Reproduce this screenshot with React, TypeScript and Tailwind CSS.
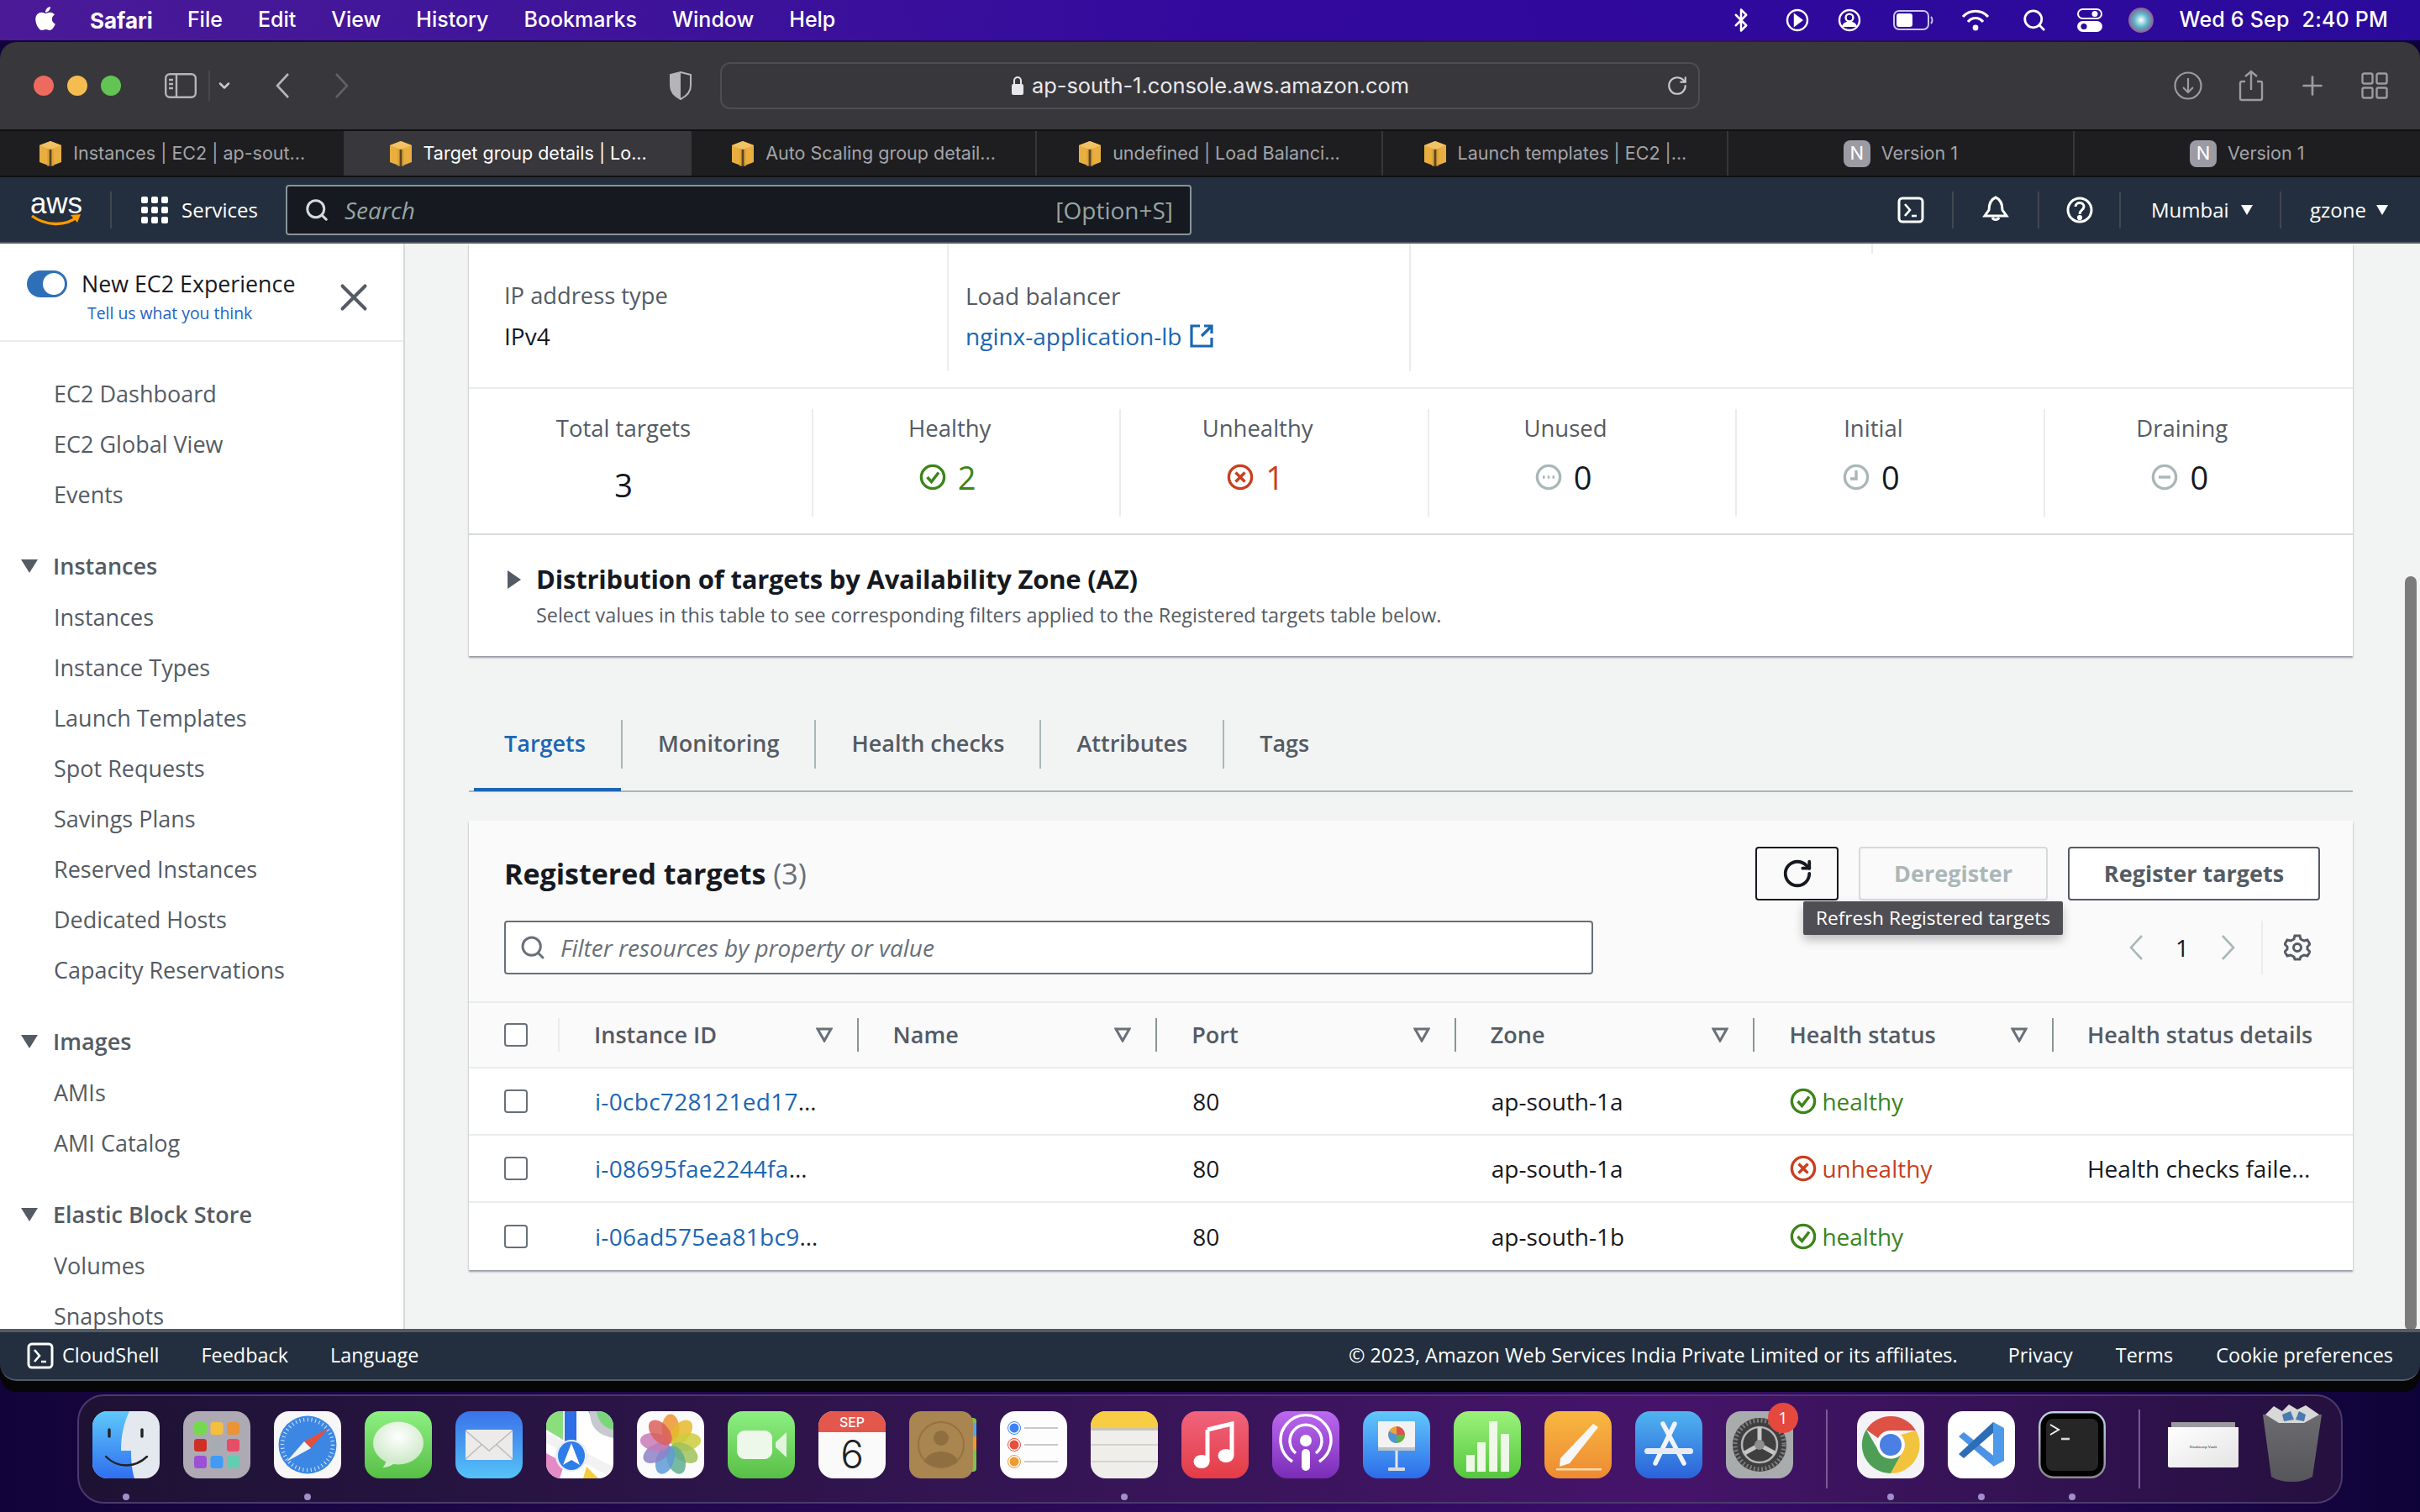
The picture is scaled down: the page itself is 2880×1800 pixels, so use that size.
import React from 'react';
import { FaApple } from 'react-icons/fa';
import { Bluetooth, Search, RotateCw, Plus, ChevronDown, X } from 'lucide-react';

const SANS = "font-['Open_Sans','Noto_Sans',sans-serif]";
const MAC = "font-['Inter','Liberation_Sans',sans-serif]";

const menuItems = ['File', 'Edit', 'View', 'History', 'Bookmarks', 'Window', 'Help'];

const tabs = [
  { label: 'Instances | EC2 | ap-sout...', kind: 'aws' },
  { label: 'Target group details | Lo...', kind: 'aws', active: true },
  { label: 'Auto Scaling group detail...', kind: 'aws' },
  { label: 'undefined | Load Balanci...', kind: 'aws' },
  { label: 'Launch templates | EC2 |...', kind: 'aws' },
  { label: 'Version 1', kind: 'notion' },
  { label: 'Version 1', kind: 'notion' },
];

const navGroups = [
  { items: ['EC2 Dashboard', 'EC2 Global View', 'Events'] },
  { title: 'Instances', items: ['Instances', 'Instance Types', 'Launch Templates', 'Spot Requests', 'Savings Plans', 'Reserved Instances', 'Dedicated Hosts', 'Capacity Reservations'] },
  { title: 'Images', items: ['AMIs', 'AMI Catalog'] },
  { title: 'Elastic Block Store', items: ['Volumes', 'Snapshots'] },
];

const rows = [
  { id: 'i-0cbc728121ed17', zone: 'ap-south-1a', ok: true, details: '' },
  { id: 'i-08695fae2244fa', zone: 'ap-south-1a', ok: false, details: 'Health checks faile...' },
  { id: 'i-06ad575ea81bc9', zone: 'ap-south-1b', ok: true, details: '' },
];

const CubeIcon = () => (
  <svg width="28" height="30" viewBox="0 0 28 30" className="shrink-0">
    <path d="M14 0 L27 5 V25 L14 30 L1 25 V5 Z" fill="#e8ae3f" />
    <path d="M1 5 L14 10 L27 5 L14 0 Z" fill="#f2c265" />
    <path d="M10 9 H18 V30 H10 Z" fill="#d69a2d" opacity="0.55" />
    <path d="M12.6 10 H15.4 V30 H12.6 Z" fill="#1e1e20" opacity="0.7" />
  </svg>
);

const NotionIcon = () => (
  <span className="w-[32px] h-[32px] rounded-[8px] bg-[#9b9ba3] text-white text-[22px] flex items-center justify-center shrink-0">N</span>
);

const CloudShellIcon = ({ size = 32 }: { size?: number }) => (
  <svg width={size} height={size} viewBox="0 0 32 32" fill="none" stroke="#fff" className="shrink-0">
    <rect x="2" y="2" width="28" height="28" rx="4" strokeWidth="3" />
    <path d="M9 9 L15 16 L9 23" strokeWidth="2.6" />
    <path d="M17 23 H23" strokeWidth="2.6" />
  </svg>
);

const CheckCircle = ({ size, color }: { size: number; color: string }) => (
  <svg width={size} height={size} viewBox="0 0 32 32" fill="none" stroke={color} strokeWidth="3.4" className="shrink-0">
    <circle cx="16" cy="16" r="13.6" />
    <path d="M9.5 16 L14.5 21.5 L23 10.5" />
  </svg>
);

const XCircle = ({ size, color }: { size: number; color: string }) => (
  <svg width={size} height={size} viewBox="0 0 32 32" fill="none" stroke={color} strokeWidth="3.4" className="shrink-0">
    <circle cx="16" cy="16" r="13.6" />
    <path d="M10.5 10.5 L21.5 21.5 M21.5 10.5 L10.5 21.5" />
  </svg>
);

const PendingIcon = ({ kind }: { kind: 'dots' | 'clock' | 'minus' }) => (
  <svg width="32" height="32" viewBox="0 0 32 32" fill="none" stroke="#aab7b8" strokeWidth="3.4" className="shrink-0">
    <circle cx="16" cy="16" r="13.6" />
    {kind === 'dots' && <path d="M9 16 H11.5 M14.8 16 H17.2 M20.5 16 H23" />}
    {kind === 'clock' && <path d="M16 8 V18 H9" />}
    {kind === 'minus' && <path d="M9 16 H23" />}
  </svg>
);

const FilterTriangle = () => (
  <svg width="20" height="18" viewBox="0 0 20 18" fill="none" stroke="#687078" strokeWidth="3" className="shrink-0">
    <path d="M2 2 H18 L10 16 Z" />
  </svg>
);

// tall, sharp chevrons used by Safari and the pagination
const Chevron = ({ dir, color, cls = '' }: { dir: 'l' | 'r'; color: string; cls?: string }) => (
  <svg width="18" height="30" viewBox="0 0 18 30" fill="none" stroke={color} strokeWidth="2.6" className={`shrink-0 ${cls}`}>
    <path d={dir === 'l' ? 'M16 1 L3 15 L16 29' : 'M2 1 L15 15 L2 29'} />
  </svg>
);

const Nav = ({ children, cls = '' }: { children: React.ReactNode; cls?: string }) => (
  <div className={`flex items-center border-l-2 border-[#414750] h-[44px] ${cls}`}>{children}</div>
);

function Stat({ label, children, big }: { label: string; children: React.ReactNode; big?: boolean }) {
  return (
    <div className="flex flex-col items-center pr-[40px] pt-[3px] border-r-2 border-[#eaeded] last:border-r-0 h-[128px]">
      <div className="text-[27.5px] leading-[40px] text-[#545b64]">{label}</div>
      <div className={`flex items-center gap-[14px] text-[38px] leading-[44px] ${big ? 'mt-[25px]' : 'mt-[16px] -ml-[5px]'}`}>{children}</div>
    </div>
  );
}

/* dock icons, all on an 80 box */
const Finder = () => (
  <svg viewBox="0 0 80 80" className="w-full h-full">
    <defs>
      <linearGradient id="fb" x1="0" y1="0" x2="0" y2="1"><stop offset="0" stopColor="#5ec8fa" /><stop offset="1" stopColor="#2f6ff0" /></linearGradient>
    </defs>
    <rect width="80" height="80" rx="18" fill="#e4e8ef" />
    <path d="M18 0 H44 C37 15 34 30 34 47 H46 C46 60 47 70 50 80 H18 A18 18 0 0 1 0 62 V18 A18 18 0 0 1 18 0 Z" fill="url(#fb)" />
    <path d="M20 22 V30 M59 22 V30" stroke="#222" strokeWidth="3.4" strokeLinecap="round" />
    <path d="M16 54 C30 68 50 68 65 54" stroke="#222" strokeWidth="2.4" fill="none" strokeLinecap="round" />
  </svg>
);

const Launchpad = () => {
  const cols = ['#74d94f', '#f5bf3e', '#ea9337', '#cf2f25', '#a6adb0', '#e84d66', '#9d4fd6', '#3f9bf6', '#63cdb0'];
  return (
    <svg viewBox="0 0 80 80" className="w-full h-full">
      <rect width="80" height="80" rx="18" fill="#aeaab4" />
      {cols.map((c, i) => (
        <rect key={i} x={13 + (i % 3) * 19.5} y={13 + Math.floor(i / 3) * 20} width="15" height="15" rx="3.5" fill={c} />
      ))}
    </svg>
  );
};

const Safari = () => (
  <svg viewBox="0 0 80 80" className="w-full h-full">
    <rect width="80" height="80" rx="18" fill="#f7f7f7" />
    <circle cx="40" cy="40" r="34.5" fill="#3d87e4" />
    <circle cx="40" cy="40" r="30" fill="none" stroke="#d7e8fb" strokeWidth="4.5" strokeDasharray="1 3.7" />
    <path d="M65 20 L36 36 L44 44 Z" fill="#e0503f" />
    <path d="M15 60 L36 36 L44 44 Z" fill="#f4f4f4" />
  </svg>
);

const Messages = () => (
  <svg viewBox="0 0 80 80" className="w-full h-full">
    <defs>
      <linearGradient id="mg" x1="0" y1="0" x2="0" y2="1"><stop offset="0" stopColor="#8df082" /><stop offset="1" stopColor="#58bf46" /></linearGradient>
      <radialGradient id="mb" cx="0.5" cy="0.35" r="0.7"><stop offset="0" stopColor="#fff" /><stop offset="1" stopColor="#c7e6c0" /></radialGradient>
    </defs>
    <rect width="80" height="80" rx="18" fill="url(#mg)" />
    <ellipse cx="40" cy="38" rx="30" ry="25.5" fill="url(#mb)" />
    <path d="M26 58 C25 62 23 66 21 67 C28 67 34 64 37 60 Z" fill="#d4ecce" />
  </svg>
);

const Mail = () => (
  <svg viewBox="0 0 80 80" className="w-full h-full">
    <defs>
      <linearGradient id="mailg" x1="0" y1="0" x2="0" y2="1"><stop offset="0" stopColor="#3a72ea" /><stop offset="1" stopColor="#55c3f8" /></linearGradient>
    </defs>
    <rect width="80" height="80" rx="18" fill="url(#mailg)" />
    <rect x="12" y="22" width="56" height="36" rx="2" fill="#ecebea" />
    <path d="M12 23 L40 47 L68 23 M12 57 L31 40 M68 57 L49 40" stroke="#b9b9b9" strokeWidth="1.4" fill="none" />
  </svg>
);

const Maps = () => (
  <svg viewBox="0 0 80 80" className="w-full h-full">
    <clipPath id="mapc"><rect width="80" height="80" rx="18" /></clipPath>
    <g clipPath="url(#mapc)">
      <rect width="80" height="80" fill="#fff" />
      <path d="M50 0 H80 V28 L60 20 Z" fill="#7ad67a" />
      <path d="M0 0 H20 V34 L0 22 Z" fill="#8adf7c" />
      <path d="M0 50 L22 62 L16 80 H0 Z" fill="#e48ac5" />
      <path d="M48 66 L62 80 H44 Z" fill="#f4cf3b" />
      <path d="M52 0 C52 20 62 28 80 32 V22 C70 20 62 14 60 0 Z" fill="#c6c9d0" />
      <path d="M22 0 H36 V40 H22 Z" fill="#2c6fe6" />
      <path d="M0 26 L80 66 V80 L0 38 Z" fill="#f2f2f2" />
      <circle cx="30" cy="53" r="19" fill="#e8eef7" />
      <ellipse cx="30" cy="53" rx="16" ry="17" fill="#2f7de8" />
      <path d="M30 38 L40 64 L30 58 L20 64 Z" fill="#fff" />
    </g>
  </svg>
);

const Photos = () => {
  const cols = ['#ec9431', '#e6b82c', '#cdcd3d', '#9fc25a', '#5fae8f', '#5f9bd6', '#8c83c7', '#c77bb7', '#d9605b'];
  return (
    <svg viewBox="0 0 80 80" className="w-full h-full">
      <rect width="80" height="80" rx="18" fill="#fbfbfb" />
      {cols.map((c, i) => (
        <ellipse key={i} cx="40" cy="21" rx="10.5" ry="17.5" fill={c} opacity="0.85" transform={`rotate(${i * 40} 40 40)`} />
      ))}
    </svg>
  );
};

const FaceTime = () => (
  <svg viewBox="0 0 80 80" className="w-full h-full">
    <defs>
      <linearGradient id="ftg" x1="0" y1="0" x2="0" y2="1"><stop offset="0" stopColor="#8df082" /><stop offset="1" stopColor="#58bf46" /></linearGradient>
    </defs>
    <rect width="80" height="80" rx="18" fill="url(#ftg)" />
    <rect x="11" y="23" width="42" height="34" rx="9" fill="#eef8ea" />
    <path d="M57 37 L70 25 V55 L57 43 Z" fill="#e3f4dd" />
  </svg>
);

const Calendar = () => (
  <svg viewBox="0 0 80 80" className="w-full h-full">
    <clipPath id="calc"><rect width="80" height="80" rx="18" /></clipPath>
    <g clipPath="url(#calc)">
      <rect width="80" height="80" fill="#fafafa" />
      <rect width="80" height="25" fill="#e4574c" />
    </g>
    <text x="40" y="19" fill="#fff" fontSize="16" fontWeight="500" textAnchor="middle" fontFamily="Inter, sans-serif">SEP</text>
    <text x="40" y="68" fill="#222" fontSize="46" fontWeight="300" textAnchor="middle" fontFamily="Inter, sans-serif">6</text>
  </svg>
);

const Contacts = () => (
  <svg viewBox="0 0 80 80" className="w-full h-full">
    <rect x="66" y="8" width="14" height="64" rx="4" fill="#7cc34d" />
    <rect x="72" y="30" width="8" height="16" fill="#ef9a2a" />
    <rect x="72" y="14" width="8" height="16" fill="#55a7e6" />
    <rect width="76" height="80" rx="14" fill="#a98550" />
    <circle cx="38" cy="40" r="27" fill="none" stroke="#947241" strokeWidth="2" />
    <circle cx="38" cy="32" r="9" fill="#8f6f40" />
    <path d="M18 60 C22 44 54 44 58 60 C50 68 26 68 18 60 Z" fill="#8f6f40" />
  </svg>
);

const Reminders = () => (
  <svg viewBox="0 0 80 80" className="w-full h-full">
    <rect width="80" height="80" rx="18" fill="#fdfdfd" />
    {[['#3b82f6', 20], ['#ea4f3d', 40], ['#ee9a31', 60]].map(([c, y]) => (
      <g key={String(y)}>
        <circle cx="17" cy={Number(y)} r="5.5" fill={String(c)} />
        <circle cx="17" cy={Number(y)} r="7.5" fill="none" stroke={String(c)} strokeWidth="1" />
        <rect x="29" y={Number(y) - 1} width="40" height="2" fill="#c9c9c9" />
      </g>
    ))}
  </svg>
);

const Notes = () => (
  <svg viewBox="0 0 80 80" className="w-full h-full">
    <clipPath id="notec"><rect width="80" height="80" rx="18" /></clipPath>
    <g clipPath="url(#notec)">
      <rect width="80" height="80" fill="#efeeea" />
      <rect width="80" height="20" fill="#f7cd44" />
      <rect y="20" width="80" height="3" fill="#c9c5b7" />
      <rect y="39" width="80" height="2" fill="#d6d4cd" />
      <rect y="59" width="80" height="2" fill="#d6d4cd" />
    </g>
  </svg>
);

const Music = () => (
  <svg viewBox="0 0 80 80" className="w-full h-full">
    <defs>
      <linearGradient id="mug" x1="0" y1="0" x2="0" y2="1"><stop offset="0" stopColor="#f0647c" /><stop offset="1" stopColor="#e43c46" /></linearGradient>
    </defs>
    <rect width="80" height="80" rx="18" fill="url(#mug)" />
    <path d="M31 22 L60 15 V52" stroke="#fff" strokeWidth="5" fill="none" />
    <path d="M31 22 V60" stroke="#fff" strokeWidth="5" fill="none" />
    <ellipse cx="24" cy="60" rx="9.5" ry="8" fill="#fff" />
    <ellipse cx="53" cy="53" rx="9.5" ry="8" fill="#fff" />
  </svg>
);

const Podcasts = () => (
  <svg viewBox="0 0 80 80" className="w-full h-full" fill="none" stroke="#fff">
    <defs>
      <linearGradient id="pog" x1="0" y1="0" x2="0" y2="1"><stop offset="0" stopColor="#bc69ef" /><stop offset="1" stopColor="#7a2cb8" /></linearGradient>
    </defs>
    <rect width="80" height="80" rx="18" fill="url(#pog)" stroke="none" />
    <path d="M24 60 A30 30 0 1 1 56 60" strokeWidth="3.4" />
    <path d="M28 50 A19 19 0 1 1 52 50" strokeWidth="3.4" />
    <circle cx="40" cy="35" r="7" fill="#fff" stroke="none" />
    <rect x="35" y="45" width="10" height="26" rx="5" fill="#fff" stroke="none" />
  </svg>
);

const Keynote = () => (
  <svg viewBox="0 0 80 80" className="w-full h-full">
    <defs>
      <linearGradient id="kg" x1="0" y1="0" x2="0" y2="1"><stop offset="0" stopColor="#61c8fb" /><stop offset="1" stopColor="#2c6cea" /></linearGradient>
    </defs>
    <rect width="80" height="80" rx="18" fill="url(#kg)" />
    <rect x="18" y="12" width="44" height="31" rx="1" fill="#f2f2f2" />
    <circle cx="40" cy="28" r="10" fill="#e8a53a" />
    <path d="M40 28 L40 18 A10 10 0 0 1 50 28 Z" fill="#d9534f" />
    <path d="M40 28 L50 28 A10 10 0 0 1 40 38 Z" fill="#5fb04c" />
    <path d="M40 28 L40 38 A10 10 0 0 1 31 24 Z" fill="#4f94d8" />
    <rect x="18" y="43" width="44" height="4" fill="#b9c3cc" />
    <rect x="38.5" y="47" width="3" height="22" fill="#e7e7e7" />
    <rect x="30" y="67" width="20" height="4" rx="1" fill="#d6dae0" />
  </svg>
);

const NumbersIcon = () => (
  <svg viewBox="0 0 80 80" className="w-full h-full">
    <defs>
      <linearGradient id="ng" x1="0" y1="0" x2="0" y2="1"><stop offset="0" stopColor="#9bf27a" /><stop offset="1" stopColor="#56c73e" /></linearGradient>
    </defs>
    <rect width="80" height="80" rx="18" fill="url(#ng)" />
    <rect x="15" y="52" width="10" height="20" fill="#eef7e8" />
    <rect x="28" y="37" width="10" height="35" fill="#eef7e8" />
    <rect x="42" y="12" width="10" height="60" fill="#eef7e8" />
    <rect x="56" y="27" width="10" height="45" fill="#eef7e8" />
  </svg>
);

const Pages = () => (
  <svg viewBox="0 0 80 80" className="w-full h-full">
    <defs>
      <linearGradient id="pg" x1="0" y1="0" x2="0" y2="1"><stop offset="0" stopColor="#f8b840" /><stop offset="1" stopColor="#ee8a33" /></linearGradient>
    </defs>
    <rect width="80" height="80" rx="18" fill="url(#pg)" />
    <path d="M58 15 L64 19 L30 62 L18 66 L19 56 Z" fill="#f7f7f7" />
    <rect x="14" y="68" width="54" height="2.5" fill="#fbd9a8" />
  </svg>
);

const AppStore = () => (
  <svg viewBox="0 0 80 80" className="w-full h-full" fill="none">
    <defs>
      <linearGradient id="asg" x1="0" y1="0" x2="0" y2="1"><stop offset="0" stopColor="#50b4f0" /><stop offset="1" stopColor="#2b62da" /></linearGradient>
    </defs>
    <rect width="80" height="80" rx="18" fill="url(#asg)" />
    <path d="M33 15 L58 62 M47 15 L24 62" stroke="#f2f4f8" strokeWidth="5.5" strokeLinecap="round" />
    <rect x="11" y="44" width="58" height="7" rx="3.5" fill="#e8ecf2" />
  </svg>
);

const SystemPrefs = () => (
  <svg viewBox="0 0 80 80" className="w-full h-full" fill="none">
    <rect width="80" height="80" rx="18" fill="#a9acad" />
    <circle cx="40" cy="40" r="32" fill="#3f3f40" />
    <circle cx="40" cy="40" r="29" stroke="#7d7d7e" strokeWidth="5" strokeDasharray="2 2.6" />
    <circle cx="40" cy="40" r="21" stroke="#b5b5b5" strokeWidth="2.5" />
    <path d="M40 40 V19 M40 40 L58 50 M40 40 L22 50" stroke="#c6c6c6" strokeWidth="5" />
    <circle cx="40" cy="40" r="6" fill="#8d8d8d" />
  </svg>
);

const Chrome = () => (
  <svg viewBox="0 0 80 80" className="w-full h-full">
    <rect width="80" height="80" rx="18" fill="#f3f3f7" />
    <path d="M40 6 A34 34 0 0 1 70 23 H40 A17 17 0 0 0 25 32 L11 22 A34 34 0 0 1 40 6 Z" fill="#de5246" />
    <path d="M70 23 A34 34 0 0 1 40 74 L52 52 A17 17 0 0 0 52 28 Z" fill="#f2c43d" />
    <path d="M11 22 L25 46 A17 17 0 0 0 52 52 L40 74 A34 34 0 0 1 11 22 Z" fill="#4e9f55" />
    <circle cx="40" cy="40" r="16.5" fill="#fff" />
    <circle cx="40" cy="40" r="13" fill="#4a7fe4" />
  </svg>
);

const VSCode = () => (
  <svg viewBox="0 0 80 80" className="w-full h-full">
    <rect width="80" height="80" rx="18" fill="#fff" />
    <path d="M13 30 L19 25 L62 59 L54 65 Z" fill="#4c93e6" />
    <path d="M54 13 L62 18 V19 L19 56 L13 51 Z" fill="#2c6db5" />
    <path d="M54 13 L67 20 V59 L54 66 Z" fill="#4c9ae9" />
  </svg>
);

const TerminalApp = () => (
  <svg viewBox="0 0 80 80" className="w-full h-full" fill="none">
    <defs>
      <linearGradient id="tg" x1="0" y1="0" x2="0" y2="1"><stop offset="0" stopColor="#bcd6e2" /><stop offset="1" stopColor="#8a8a8a" /></linearGradient>
    </defs>
    <rect width="80" height="80" rx="18" fill="url(#tg)" />
    <rect x="2.5" y="2.5" width="75" height="75" rx="15" fill="#000" />
    <rect x="9" y="9" width="62" height="62" rx="8" fill="#262626" />
    <path d="M14 16 L24 22 L14 28" stroke="#f2f2f2" strokeWidth="2" />
    <path d="M27 33 H37" stroke="#d8d8d8" strokeWidth="2.6" />
  </svg>
);

const DockTile = ({ children, dot, badge }: { children: React.ReactNode; dot?: boolean; badge?: boolean }) => (
  <div className="relative w-[108px] flex flex-col items-center shrink-0">
    <div className="w-[80px] h-[80px]">{children}</div>
    {badge && (
      <span className="absolute top-[-10px] left-[64px] w-[36px] h-[36px] rounded-full bg-[#e5483c] text-white text-[20px] flex items-center justify-center">1</span>
    )}
    <div className={`mt-[18px] w-[8px] h-[8px] rounded-full ${dot ? 'bg-[#a18fc9]' : ''}`} />
  </div>
);

const dockApps = [
  { el: <Finder />, dot: true }, { el: <Launchpad /> }, { el: <Safari />, dot: true }, { el: <Messages /> }, { el: <Mail /> },
  { el: <Maps /> }, { el: <Photos /> }, { el: <FaceTime /> }, { el: <Calendar /> }, { el: <Contacts /> }, { el: <Reminders /> },
  { el: <Notes />, dot: true }, { el: <Music /> }, { el: <Podcasts /> }, { el: <Keynote /> }, { el: <NumbersIcon /> }, { el: <Pages /> },
  { el: <AppStore /> }, { el: <SystemPrefs />, badge: true },
];

function MenuBar() {
  return (
    <div className={`h-[48px] flex items-center text-white text-[25px] bg-gradient-to-r from-[#4a1a97] via-[#33099d] to-[#2a0a9b] pl-[38px] pr-[38px] ${MAC}`}>
      <FaApple className="text-[32px] mb-[4px]" />
      <span className="ml-[37px] font-bold text-[26px]">Safari</span>
      <div className="flex gap-[42px] ml-[41px]">
        {menuItems.map((m) => <span key={m} className="font-medium">{m}</span>)}
      </div>
      <div className="ml-auto flex items-center">
        <Bluetooth size={30} strokeWidth={2} />
        <svg width="28" height="28" viewBox="0 0 28 28" fill="none" stroke="#fff" strokeWidth="2.4" className="ml-[38px]">
          <circle cx="14" cy="14" r="12" /><path d="M11 8 L19 14 L11 20 Z" fill="#fff" />
        </svg>
        <svg width="28" height="28" viewBox="0 0 28 28" fill="none" stroke="#fff" strokeWidth="2.4" className="ml-[34px]">
          <circle cx="14" cy="14" r="12" /><circle cx="14" cy="11" r="4.4" />
          <path d="M6 22 C8 15 20 15 22 22" fill="#fff" />
        </svg>
        <svg width="48" height="24" viewBox="0 0 48 24" fill="none" className="ml-[38px]">
          <rect x="1" y="1" width="41" height="22" rx="6" stroke="#c9c4e6" strokeWidth="2" />
          <rect x="4" y="4" width="19" height="16" rx="3" fill="#fff" />
          <path d="M45 8 C47 10 47 14 45 16" stroke="#c9c4e6" strokeWidth="2" />
        </svg>
        <svg width="34" height="26" viewBox="0 0 34 26" fill="none" stroke="#fff" strokeWidth="3.2" className="ml-[33px]">
          <path d="M2 9 C10 0 24 0 32 9" /><path d="M8 15 C13 9 21 9 26 15" />
          <circle cx="17" cy="22" r="3.4" fill="#fff" stroke="none" />
        </svg>
        <Search size={30} strokeWidth={2.2} className="ml-[38px]" />
        <svg width="30" height="28" viewBox="0 0 30 28" fill="none" className="ml-[36px]">
          <rect x="1" y="1" width="28" height="11" rx="5.5" stroke="#fff" strokeWidth="2" /><circle cx="21" cy="6.5" r="3.5" fill="#fff" />
          <rect x="0" y="15" width="30" height="13" rx="6.5" fill="#fff" /><circle cx="8" cy="21.5" r="3.6" fill="#33099d" />
        </svg>
        <svg width="30" height="30" viewBox="0 0 30 30" className="ml-[31px]">
          <defs>
            <radialGradient id="siri" cx="0.5" cy="0.5" r="0.6"><stop offset="0" stopColor="#fff" /><stop offset="0.45" stopColor="#5bb7c9" /><stop offset="1" stopColor="#a3357d" /></radialGradient>
          </defs>
          <circle cx="15" cy="15" r="15" fill="url(#siri)" />
        </svg>
        <span className="ml-[30px] font-medium tracking-[0.2px]">Wed 6 Sep</span>
        <span className="ml-[15px] font-medium tracking-[0.2px]">2:40 PM</span>
      </div>
    </div>
  );
}

function SafariToolbar() {
  return (
    <div className="h-[104px] bg-[#38373b] flex items-center text-[#d8d8da]">
      <div className="flex items-center gap-[16px] ml-[40px]">
        <span className="w-[24px] h-[24px] rounded-full bg-[#ee6a5f]" />
        <span className="w-[24px] h-[24px] rounded-full bg-[#f5bd4f]" />
        <span className="w-[24px] h-[24px] rounded-full bg-[#61c454]" />
      </div>
      <svg width="38" height="30" viewBox="0 0 38 30" fill="none" stroke="#b5b5b8" strokeWidth="2.4" className="ml-[52px]">
        <rect x="1.2" y="1.2" width="35.6" height="27.6" rx="5" /><path d="M14 1 V29" />
        <path d="M5 8 H10 M5 13 H10 M5 18 H10" />
      </svg>
      <div className="w-[2px] h-[36px] bg-[#48474b] ml-[14px]" />
      <ChevronDown size={20} strokeWidth={3} className="ml-[7px] text-[#c8c8ca]" />
      <Chevron dir="l" color="#b5b5b8" cls="ml-[50px]" />
      <Chevron dir="r" color="#616064" cls="ml-[53px]" />
      <svg width="26" height="34" viewBox="0 0 26 34" className="ml-[381px]">
        <path d="M13 1 L25 4 V17 C25 25 19 30 13 33 C7 30 1 25 1 17 V4 Z" fill="none" stroke="#b5b5b8" strokeWidth="2" />
        <path d="M13 1 V33 C7 30 1 25 1 17 V4 Z" fill="#b5b5b8" />
      </svg>
      <div className="ml-[34px] w-[1166px] h-[56px] border-2 border-[#4e4d51] rounded-[12px] flex items-center justify-center relative">
        <svg width="16" height="24" viewBox="0 0 16 24" fill="none" className="mr-[9px]">
          <path d="M4 11 V6 A4 4 0 0 1 12 6 V11" stroke="#e8e8ea" strokeWidth="2" /><rect x="1" y="10" width="14" height="13" rx="2" fill="#e8e8ea" />
        </svg>
        <span className={`text-[25.4px] text-[#e9e9eb] ${MAC}`}>ap-south-1.console.aws.amazon.com</span>
        <RotateCw size={26} strokeWidth={2} className="absolute right-[12px] text-[#c8c8ca]" />
      </div>
      <div className="ml-auto mr-[38px] flex items-center text-[#9c9ca0]">
        <svg width="34" height="34" viewBox="0 0 34 34" fill="none" stroke="currentColor" strokeWidth="2.2">
          <circle cx="17" cy="17" r="15.5" /><path d="M17 8 V25 M11 19 L17 25 L23 19" />
        </svg>
        <svg width="30" height="38" viewBox="0 0 30 38" fill="none" stroke="currentColor" strokeWidth="2.4" className="ml-[43px]">
          <path d="M8 14 H4 Q2 14 2 16 V34 Q2 36 4 36 H26 Q28 36 28 34 V16 Q28 14 26 14 H22" /><path d="M15 24 V2 M8 8 L15 2 L22 8" />
        </svg>
        <Plus size={36} strokeWidth={1.8} className="ml-[40px]" />
        <svg width="32" height="32" viewBox="0 0 32 32" fill="none" stroke="currentColor" strokeWidth="2.4" className="ml-[40px]">
          <rect x="1.5" y="1.5" width="12" height="12" rx="2" /><rect x="18.5" y="1.5" width="12" height="12" rx="2" />
          <rect x="1.5" y="18.5" width="12" height="12" rx="2" /><rect x="18.5" y="18.5" width="12" height="12" rx="2" />
        </svg>
      </div>
    </div>
  );
}

function TabBar() {
  return (
    <div className={`h-[57px] grid grid-cols-7 bg-[#1e1e20] border-y-2 border-[#111113] ${MAC}`}>
      {tabs.map((t, i) => (
        <div
          key={i}
          className={`flex items-center justify-center gap-[13px] text-[21.5px] whitespace-nowrap border-r-2 border-[#36363a] last:border-r-0 ${t.active ? 'bg-[#38373b] text-white' : 'text-[#a4a4a8]'}`}
        >
          {t.kind === 'aws' ? <CubeIcon /> : <NotionIcon />}
          <span>{t.label}</span>
        </div>
      ))}
    </div>
  );
}

function AwsNav() {
  return (
    <div className={`h-[79px] bg-[#232f3e] border-b-2 border-[#545b64] flex items-center text-white ${SANS}`}>
      <div className="ml-[36px] w-[62px] flex flex-col items-center shrink-0">
        <span className="font-['Liberation_Sans',sans-serif] text-[35px] leading-[26px]">aws</span>
        <svg width="62" height="16" viewBox="0 0 62 16">
          <path d="M2 2 C18 14 42 15 56 3" stroke="#ff9900" strokeWidth="3.4" fill="none" />
          <path d="M48 1 L60 0 L56 10" fill="#ff9900" />
        </svg>
      </div>
      <div className="w-[2px] h-[44px] bg-[#414750] ml-[33px]" />
      <div className="grid grid-cols-3 gap-[4px] ml-[35px] w-[32px]">
        {Array.from({ length: 9 }).map((_, i) => <span key={i} className="h-[8px] bg-white rounded-[2px]" />)}
      </div>
      <span className="ml-[16px] w-[89px] text-[24px] whitespace-nowrap">Services</span>
      <div className="ml-[35px] w-[1078px] h-[60px] bg-[#16191f] border-2 border-[#879596] rounded-[4px] flex items-center px-[20px]">
        <Search size={30} strokeWidth={2.4} className="text-[#d5dbdb]" />
        <span className="ml-[18px] text-[28px] italic text-[#95a5a6]">Search</span>
        <span className="ml-auto text-[28px] text-[#95a5a6]">[Option+S]</span>
      </div>
      <div className="ml-auto flex items-center">
        <div className="w-[98px] flex justify-center"><CloudShellIcon /></div>
        <Nav cls="w-[102px] justify-center">
          <svg width="32" height="34" viewBox="0 0 32 34" fill="none" stroke="#fff" strokeWidth="3">
            <path d="M16 2 C9 5 8 11 8 17 L3 24 H29 L24 17 C24 11 23 5 16 2 Z" /><path d="M12 26 A4.5 4.5 0 0 0 20 26" />
          </svg>
        </Nav>
        <Nav cls="w-[97px] justify-center">
          <svg width="32" height="32" viewBox="0 0 32 32" fill="none" stroke="#fff" strokeWidth="3">
            <circle cx="16" cy="16" r="14" /><path d="M11 12 C11 6 21 6 21 12 C21 16 16 16 16 21" /><circle cx="16" cy="25" r="1.6" fill="#fff" />
          </svg>
        </Nav>
        <Nav cls="w-[191px] pl-[36px] gap-[14px] text-[24px]">
          Mumbai <svg width="14" height="12" viewBox="0 0 14 12" fill="#fff"><path d="M0 0 H14 L7 12 Z" /></svg>
        </Nav>
        <Nav cls="w-[167px] pl-[34px] gap-[12px] text-[24px]">
          gzone <svg width="14" height="12" viewBox="0 0 14 12" fill="#fff"><path d="M0 0 H14 L7 12 Z" /></svg>
        </Nav>
      </div>
    </div>
  );
}

function Sidebar() {
  return (
    <aside className="w-[482px] shrink-0 bg-white border-r-2 border-[#d5dbdb] overflow-hidden">
      <div className="h-[117px] border-b-2 border-[#eaeded] flex items-start pl-[32px] pt-[32px] pr-[32px]">
        <div className="w-[48px] h-[32px] rounded-full bg-[#2f6fb7] flex items-center justify-end pr-[3px] shrink-0">
          <span className="w-[26px] h-[26px] rounded-full bg-white" />
        </div>
        <div className="ml-[17px]">
          <div className="text-[26.8px] leading-[32px] text-[#16191f] whitespace-nowrap">New EC2 Experience</div>
          <div className="text-[19.4px] leading-[30px] mt-[4px] ml-[7px] text-[#1f63c5] whitespace-nowrap">Tell us what you think</div>
        </div>
        <X size={54} strokeWidth={1.8} className="ml-auto mt-[5px] text-[#545b64] shrink-0" />
      </div>
      <div className="pt-[32px]">
        {navGroups.map((g, gi) => (
          <div key={gi} className={gi > 0 ? 'mt-[24px]' : ''}>
            {g.title && (
              <div className="h-[62px] flex items-center pl-[25px] text-[27px] font-semibold text-[#545b64]">
                <svg width="20" height="16" viewBox="0 0 20 16" fill="#545b64" className="mr-[18px]"><path d="M0 0 H20 L10 16 Z" /></svg>
                {g.title}
              </div>
            )}
            {g.items.map((it) => (
              <div key={it} className="h-[60px] flex items-center pl-[64px] text-[27px] text-[#545b64]">{it}</div>
            ))}
          </div>
        ))}
      </div>
    </aside>
  );
}

function DetailsCard() {
  return (
    <section className="bg-white shadow-[0_2px_2px_rgba(84,91,100,0.6)]">
      <div className="grid grid-cols-[571px_550px_1fr] h-[173px] border-b-2 border-[#eaeded]">
        <div className="h-[152px] border-r-2 border-[#eaeded] pl-[42px] pt-[42px]">
          <div className="text-[27.3px] leading-[40px] text-[#545b64]">IP address type</div>
          <div className="text-[28px] leading-[40px] mt-[8px] text-[#16191f]">IPv4</div>
        </div>
        <div className="h-[152px] border-r-2 border-[#eaeded] pl-[20px] pt-[42px]">
          <div className="text-[28px] leading-[40px] text-[#545b64]">Load balancer</div>
          <div className="text-[28px] leading-[40px] mt-[8px] text-[#1b66b3] flex items-center gap-[10px]">
            nginx-application-lb
            <svg width="28" height="28" viewBox="0 0 28 28" fill="none" stroke="#1b66b3" strokeWidth="3.2">
              <path d="M12 2 H2 V26 H26 V16" /><path d="M14 14 L26 2 M17 2 H26 V11" />
            </svg>
          </div>
        </div>
        <div><div className="w-[550px] h-[12px] border-r-2 border-[#eaeded]" /></div>
      </div>
      <div className="h-[174px] border-b-2 border-[#d5dbdb] pt-[24px] grid grid-cols-[410px_repeat(5,1fr)]">
        <Stat label="Total targets" big><span className="text-[#16191f]">3</span></Stat>
        <Stat label="Healthy"><CheckCircle size={32} color="#3d8419" /><span className="text-[#3d8419]">2</span></Stat>
        <Stat label="Unhealthy"><XCircle size={32} color="#c93f1e" /><span className="text-[#c93f1e]">1</span></Stat>
        <Stat label="Unused"><PendingIcon kind="dots" /><span className="text-[#16191f]">0</span></Stat>
        <Stat label="Initial"><PendingIcon kind="clock" /><span className="text-[#16191f]">0</span></Stat>
        <Stat label="Draining"><PendingIcon kind="minus" /><span className="text-[#16191f]">0</span></Stat>
      </div>
      <div className="h-[144px] pl-[46px] pt-[28px] flex items-start">
        <svg width="16" height="22" viewBox="0 0 16 22" fill="#545b64" className="mt-[14px]"><path d="M0 0 L16 11 L0 22 Z" /></svg>
        <div className="ml-[18px]">
          <div className="text-[31px] leading-[48px] font-bold tracking-[-0.2px] text-[#16191f]">Distribution of targets by Availability Zone (AZ)</div>
          <div className="text-[23.4px] leading-[34px] mt-[2px] text-[#545b64]">Select values in this table to see corresponding filters applied to the Registered targets table below.</div>
        </div>
      </div>
    </section>
  );
}

function TabsRow() {
  const labels = ['Targets', 'Monitoring', 'Health checks', 'Attributes', 'Tags'];
  return (
    <div className="mt-[72px] h-[90px] border-b-2 border-[#aab7b8] flex items-start pt-[4px]">
      {labels.map((l, i) => (
        <React.Fragment key={l}>
          {i > 0 && <div className="w-[2px] h-[58px] bg-[#aab7b8]" />}
          <div className={`relative h-[56px] flex items-center text-[27px] font-semibold px-[42px] ${i === 0 ? 'text-[#1b66b3]' : 'text-[#545b64]'}`}>
            {l}
            {i === 0 && <span className="absolute left-[6px] right-0 bottom-[-29px] h-[4px] bg-[#1b66b3]" />}
          </div>
        </React.Fragment>
      ))}
    </div>
  );
}

function TargetsCard() {
  const cols = ['Instance ID', 'Name', 'Port', 'Zone', 'Health status'];
  return (
    <section className="mt-[34px] bg-white shadow-[0_2px_2px_rgba(84,91,100,0.6)]">
      <div className="bg-[#fafafa] h-[217px] border-b-2 border-[#eaeded] px-[42px] relative">
        <div className="flex items-start pt-[31px]">
          <h2 className="text-[34px] leading-[64px] font-bold text-[#16191f]">
            Registered targets <span className="font-normal text-[#687078]">(3)</span>
          </h2>
          <div className="ml-auto flex gap-[24px] -mr-[3px]">
            <div className="w-[99px] h-[64px] border-2 border-[#16191f] rounded-[4px] flex items-center justify-center">
              <RotateCw size={38} strokeWidth={2.4} className="text-[#16191f]" />
            </div>
            <div className="w-[225px] h-[64px] border-2 border-[#d5dbdb] rounded-[4px] flex items-center justify-center text-[27px] font-bold text-[#aab7b8]">Deregister</div>
            <div className="w-[300px] h-[64px] border-2 border-[#545b64] rounded-[4px] bg-white flex items-center justify-center text-[27px] font-bold text-[#545b64]">Register targets</div>
          </div>
        </div>
        <div className="absolute top-[96px] left-[1588px] h-[40px] w-[309px] rounded-[2px] bg-[#4f4e54] text-white text-[22.7px] flex items-center justify-center shadow-[0_6px_12px_rgba(0,0,0,0.25)]">
          Refresh Registered targets
        </div>
        <div className="flex items-center mt-[24px]">
          <div className="w-[1296px] h-[64px] border-2 border-[#687078] rounded-[4px] bg-white flex items-center pl-[16px] shrink-0">
            <Search size={32} strokeWidth={2.2} className="text-[#687078]" />
            <span className="ml-[17px] text-[28px] italic text-[#687078]">Filter resources by property or value</span>
          </div>
          <Chevron dir="l" color="#aab7b8" cls="ml-[637px]" />
          <span className="ml-[36px] w-[20px] text-center text-[28px] text-[#16191f]">1</span>
          <Chevron dir="r" color="#aab7b8" cls="ml-[36px]" />
          <div className="w-[2px] h-[64px] bg-[#eaeded] ml-[30px]" />
          <svg width="32" height="32" viewBox="0 0 32 32" fill="none" stroke="#545b64" strokeWidth="3" className="ml-[25px] shrink-0">
            <path d="M13 2 H19 L20 6 L24 8 L28 7 L31 12 L28 15 V18 L31 21 L28 26 L24 25 L20 27 L19 30 H13 L12 27 L8 25 L4 26 L1 21 L4 18 V15 L1 12 L4 7 L8 8 L12 6 Z" />
            <circle cx="16" cy="16" r="4.5" />
          </svg>
        </div>
      </div>
      <div className="h-[78px] bg-[#fafafa] border-b-2 border-[#eaeded] grid grid-cols-[108px_repeat(5,355.6px)_1fr] items-center text-[27px] font-semibold text-[#545b64]">
        <div className="pl-[42px] flex items-center h-[40px] border-r-2 border-[#eaeded]">
          <span className="w-[28px] h-[28px] border-2 border-[#687078] rounded-[4px] bg-white" />
        </div>
        {cols.map((c) => (
          <div key={c} className="flex items-center justify-between pl-[41px] pr-[29px] h-[40px] border-r-2 border-[#879596]">
            <span>{c}</span><FilterTriangle />
          </div>
        ))}
        <div className="pl-[40px] whitespace-nowrap">Health status details</div>
      </div>
      {rows.map((r) => (
        <div key={r.id} className="h-[80px] border-b-2 border-[#eaeded] last:border-b-0 grid grid-cols-[108px_repeat(5,355.6px)_1fr] items-center text-[28px] text-[#16191f]">
          <div className="pl-[42px] flex items-center">
            <span className="w-[28px] h-[28px] border-2 border-[#687078] rounded-[4px]" />
          </div>
          <div className="pl-[42px] whitespace-nowrap">
            <span className="text-[#1b66b3] tracking-[0.3px]">{r.id}</span>…
          </div>
          <div />
          <div className="pl-[42px]">80</div>
          <div className="pl-[42px]">{r.zone}</div>
          <div className={`pl-[42px] flex items-center gap-[6px] ${r.ok ? 'text-[#3d8419]' : 'text-[#c93f1e]'}`}>
            {r.ok ? <CheckCircle size={32} color="#3d8419" /> : <XCircle size={32} color="#c93f1e" />}
            {r.ok ? 'healthy' : 'unhealthy'}
          </div>
          <div className="pl-[40px] whitespace-nowrap">{r.details}</div>
        </div>
      ))}
    </section>
  );
}

function Footer() {
  const links = ['Privacy', 'Terms', 'Cookie preferences'];
  return (
    <div className={`h-[62px] bg-[#232f3e] border-y-2 border-[#545b64] border-t-[4px] rounded-b-[20px] flex items-center text-white text-[23.4px] pl-[32px] pr-[32px] ${SANS}`}>
      <CloudShellIcon />
      <span className="ml-[10px]">CloudShell</span>
      <span className="ml-[50px]">Feedback</span>
      <span className="ml-[50px]">Language</span>
      <span className="ml-auto">© 2023, Amazon Web Services India Private Limited or its affiliates.</span>
      {links.map((l, i) => (
        <span key={l} className={i === 0 ? 'ml-[60px]' : 'ml-[51px]'}>{l}</span>
      ))}
    </div>
  );
}

function Dock() {
  return (
    <div className="mt-[3px] mx-[92px] h-[130px] rounded-[32px] border-2 border-[#4a3a6c] bg-gradient-to-r from-[#1d1234] via-[#45146a] via-70% to-[#25103f] flex items-start pl-[2px] pt-[18px]">
      {dockApps.map((a, i) => (
        <DockTile key={i} dot={a.dot} badge={a.badge}>{a.el}</DockTile>
      ))}
      <div className="w-[2px] h-[94px] bg-[#7a5a96] mt-[-2px] ml-[25px]" />
      <div className="ml-[21px] flex">
        <DockTile dot><Chrome /></DockTile>
        <DockTile dot><VSCode /></DockTile>
        <DockTile dot><TerminalApp /></DockTile>
      </div>
      <div className="w-[2px] h-[94px] bg-[#7a5a96] mt-[-2px] ml-[25px]" />
      <div className="ml-[33px] mt-[13px] w-[84px] h-[54px] shrink-0 rounded-[2px] overflow-hidden flex flex-col">
        <div className="h-[6px] bg-[#9b9b9f] mx-[4px]" />
        <div className="flex-1 bg-gradient-to-br from-white to-[#e4e4e4] flex items-center justify-center">
          <span className="font-['Liberation_Serif',serif] text-[5px] leading-[6px] text-[#222]">Hashicorp Vault</span>
        </div>
      </div>
      <svg width="72" height="92" viewBox="0 0 72 92" className="ml-[28px] mt-[-8px]">
        <defs>
          <linearGradient id="trash" x1="0" y1="0" x2="0" y2="1"><stop offset="0" stopColor="#6c6c70" /><stop offset="1" stopColor="#56565a" /></linearGradient>
        </defs>
        <path d="M1 12 L71 12 L60 86 Q50 92 36 92 Q20 92 11 86 Z" fill="url(#trash)" />
        <path d="M4 12 L14 2 L24 8 L32 0 L42 6 L52 1 L68 12 L50 22 L20 22 Z" fill="#d8d8d8" />
        <path d="M24 12 L34 8 L38 18 L26 20 Z M44 8 L52 12 L50 20 L40 18 Z" fill="#4b7ab0" />
      </svg>
    </div>
  );
}

export default function App() {
  return (
    <div className={`w-[2880px] h-[1800px] overflow-hidden flex flex-col bg-gradient-to-r from-[#12043a] via-[#3a0d6a] via-70% to-[#0e0338] ${SANS}`}>
      <MenuBar />
      <div className="mt-[2px] rounded-[20px] shadow-[0_13px_0_#060606] overflow-hidden flex flex-col h-[1594px] shrink-0">
        <SafariToolbar />
        <TabBar />
        <AwsNav />
        <div className="flex-1 min-h-0 flex bg-[#f2f3f3]">
          <Sidebar />
          <main className="flex-1 min-w-0 overflow-hidden pl-[76px] pr-[80px]">
            <DetailsCard />
            <TabsRow />
            <TargetsCard />
          </main>
          <div className="w-[18px] shrink-0 -ml-[18px] pt-[396px]">
            <div className="w-[14px] h-[898px] rounded-full bg-[#7b7b7b]" />
          </div>
        </div>
        <Footer />
      </div>
      <div className="h-[13px] shrink-0" />
      <Dock />
    </div>
  );
}
